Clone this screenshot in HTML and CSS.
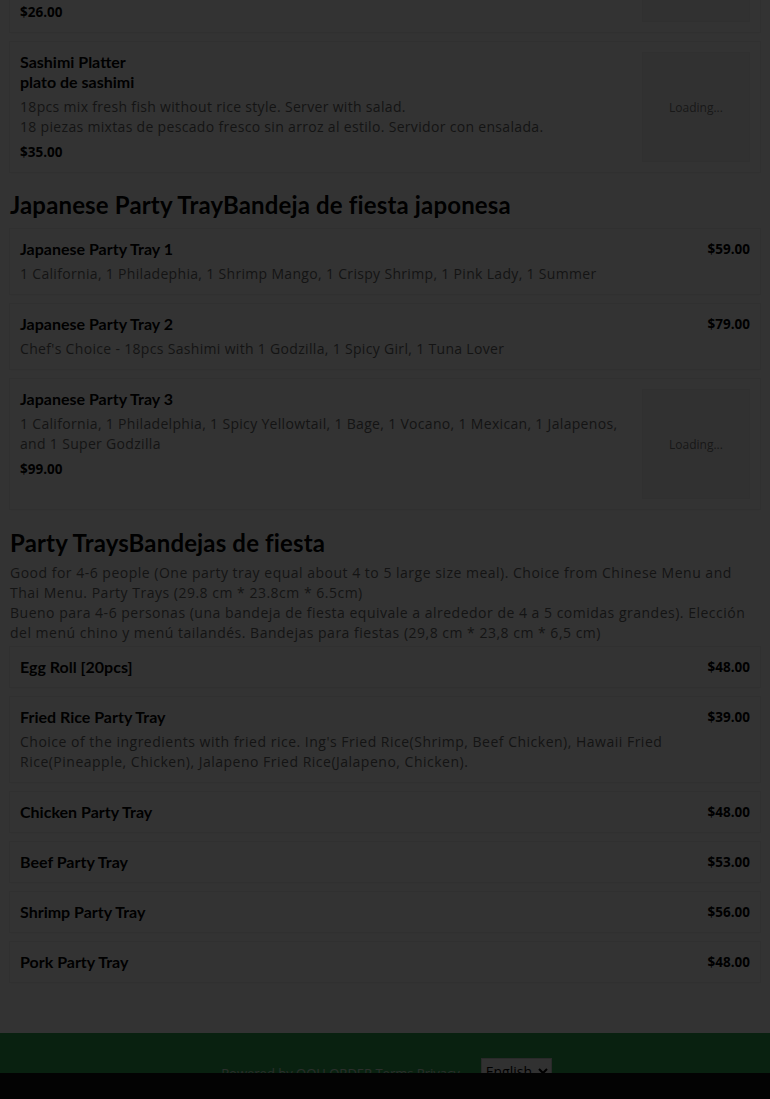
FILE: index.html
```html
<!DOCTYPE html>
<html lang="en">
<head>
<meta charset="utf-8">
<title>Menu</title>
<link rel="stylesheet" href="styles.css">
</head>
<body>
<main class="page">
  <section class="menu-section">
    <div class="item item-tail">
      <div class="item-body">
        <div class="price">$26.00</div>
      </div>
      <div class="thumb">Loading...</div>
    </div>
    <div class="item">
      <div class="item-body">
        <div class="item-title">Sashimi Platter<br>plato de sashimi</div>
        <div class="item-desc">18pcs mix fresh fish without rice style. Server with salad.<br>18 piezas mixtas de pescado fresco sin arroz al estilo. Servidor con ensalada.</div>
        <div class="price">$35.00</div>
      </div>
      <div class="thumb">Loading...</div>
    </div>
  </section>

  <section class="menu-section">
    <h2 class="section-title">Japanese Party TrayBandeja de fiesta japonesa</h2>
    <div class="item">
      <div class="item-body">
        <div class="item-head"><div class="item-title">Japanese Party Tray 1</div><div class="price">$59.00</div></div>
        <div class="item-desc">1 California, 1 Philadephia, 1 Shrimp Mango, 1 Crispy Shrimp, 1 Pink Lady, 1 Summer</div>
      </div>
    </div>
    <div class="item">
      <div class="item-body">
        <div class="item-head"><div class="item-title">Japanese Party Tray 2</div><div class="price">$79.00</div></div>
        <div class="item-desc">Chef's Choice - 18pcs Sashimi with 1 Godzilla, 1 Spicy Girl, 1 Tuna Lover</div>
      </div>
    </div>
    <div class="item">
      <div class="item-body">
        <div class="item-title">Japanese Party Tray 3</div>
        <div class="item-desc">1 California, 1 Philadelphia, 1 Spicy Yellowtail, 1 Bage, 1 Vocano, 1 Mexican, 1 Jalapenos, and 1 Super Godzilla</div>
        <div class="price">$99.00</div>
      </div>
      <div class="thumb">Loading...</div>
    </div>
  </section>

  <section class="menu-section">
    <h2 class="section-title section-title-lower">Party TraysBandejas de fiesta</h2>
    <p class="section-desc">Good for 4-6 people (One party tray equal about 4 to 5 large size meal). Choice from Chinese Menu and Thai Menu. Party Trays (29.8 cm * 23.8cm * 6.5cm)<br>Bueno para 4-6 personas (una bandeja de fiesta equivale a alrededor de 4 a 5 comidas grandes). Elección del menú chino y menú tailandés. Bandejas para fiestas (29,8 cm * 23,8 cm * 6,5 cm)</p>
    <div class="item">
      <div class="item-body">
        <div class="item-head"><div class="item-title">Egg Roll [20pcs]</div><div class="price">$48.00</div></div>
      </div>
    </div>
    <div class="item">
      <div class="item-body">
        <div class="item-head"><div class="item-title">Fried Rice Party Tray</div><div class="price">$39.00</div></div>
        <div class="item-desc item-desc-narrow">Choice of the ingredients with fried rice. Ing's Fried Rice(Shrimp, Beef Chicken), Hawaii Fried Rice(Pineapple, Chicken), Jalapeno Fried Rice(Jalapeno, Chicken).</div>
      </div>
    </div>
    <div class="item">
      <div class="item-body">
        <div class="item-head"><div class="item-title">Chicken Party Tray</div><div class="price">$48.00</div></div>
      </div>
    </div>
    <div class="item">
      <div class="item-body">
        <div class="item-head"><div class="item-title">Beef Party Tray</div><div class="price">$53.00</div></div>
      </div>
    </div>
    <div class="item">
      <div class="item-body">
        <div class="item-head"><div class="item-title">Shrimp Party Tray</div><div class="price">$56.00</div></div>
      </div>
    </div>
    <div class="item">
      <div class="item-body">
        <div class="item-head"><div class="item-title">Pork Party Tray</div><div class="price">$48.00</div></div>
      </div>
    </div>
  </section>
</main>

<footer class="site-footer">
  <div class="footer-inner">
    <span class="footer-links">Powered by OOH ORDER <a href="#">Terms</a> <a href="#">Privacy</a></span>
    <select class="lang-select">
      <option>English</option>
      <option>Español</option>
    </select>
  </div>
</footer>

<div class="bottom-bar"></div>
<div class="overlay"></div>
</body>
</html>
```

FILE: styles.css
```css
* {
  box-sizing: border-box;
}

html, body {
  margin: 0;
  padding: 0;
  background: #ffffff;
}

body {
  font-family: "Open Sans", "Liberation Sans", sans-serif;
  color: #000;
}

.page {
  padding: 0 10px 41px;
}

.menu-section {
  margin: 0;
}

.section-title {
  font-family: "Lato", "Liberation Sans", sans-serif;
  font-weight: 700;
  font-size: 24px;
  letter-spacing: 0.15px;
  line-height: 30px;
  margin: 18px 0 5px;
  color: #000;
}

.section-title-lower {
  margin-top: 19px;
}

.section-title + .item {
  margin-top: 9px;
}

.section-desc {
  margin: 0 0 4px;
  font-size: 14px;
  line-height: 20px;
  letter-spacing: 0.5px;
  color: #666;
}

.item {
  display: flex;
  gap: 10px;
  padding: 10px;
  margin-bottom: 10px;
  background: #fff;
  box-shadow: 0 0 0 1px #f0f0f0, 0 1px 3px rgba(0, 0, 0, 0.06);
}

.item-tail {
  margin-top: -98px;
}

.item-tail .item-body {
  justify-content: flex-end;
}

.item-body {
  flex: 1;
  display: flex;
  flex-direction: column;
  min-width: 0;
}

.item-head {
  display: flex;
  justify-content: space-between;
  align-items: flex-start;
}

.item-title {
  font-family: "Lato", "Liberation Sans", sans-serif;
  font-weight: 700;
  font-size: 16px;
  line-height: 20px;
}

.item-desc {
  margin-top: 5px;
  font-size: 14px;
  line-height: 20px;
  letter-spacing: 0.32px;
  color: #666;
}

.item-desc-narrow {
  padding-right: 60px;
  letter-spacing: 0.5px;
}

.price {
  font-weight: 700;
  font-size: 13.5px;
  line-height: 20px;
}

.item-body > .price {
  margin-top: 5px;
}

.thumb {
  flex: 0 0 108px;
  height: 110px;
  display: flex;
  align-items: center;
  justify-content: center;
  background: #f6f6f6;
  border: 1px solid #f0f0f0;
  font-size: 12px;
  color: #777;
}

.site-footer {
  background: #2fa653;
  padding: 25px 10px 30px;
}

.footer-inner {
  display: flex;
  justify-content: center;
  align-items: center;
  gap: 21px;
  padding-left: 3px;
}

.footer-links {
  font-size: 13px;
  color: #cfe3d4;
  padding-top: 2px;
}

.footer-links a {
  color: #cfe3d4;
  text-decoration: none;
}

.lang-select {
  font-family: "Open Sans", "Liberation Sans", sans-serif;
  font-size: 14px;
  height: 27px;
  width: 71px;
  background: #f2f2f2;
  border: 1px solid #ccc;
  color: #000;
}

.bottom-bar {
  position: fixed;
  left: 0;
  right: 0;
  bottom: 0;
  height: 26px;
  background: #111;
}

.overlay {
  position: fixed;
  inset: 0;
  background: rgba(0, 0, 0, 0.8);
}
```
